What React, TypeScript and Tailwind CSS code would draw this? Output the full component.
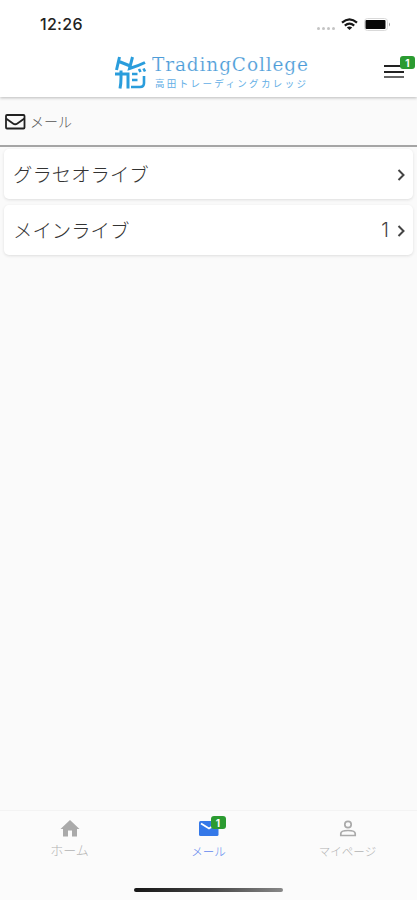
import React from 'react';

const jp = "font-['Inter','Noto_Sans_CJK_JP',sans-serif]";

function Status() {
  return (
    <div className="flex h-12 items-center justify-between pl-10 pr-[26px]">
      <span className="text-[16px] font-medium leading-5 tracking-[0.3px] text-[#222]">12:26</span>
      <div className="flex items-center">
        <div className="mr-[6px] mt-2 flex gap-[2px]">
          {[0, 1, 2, 3].map((i) => <i key={i} className="h-[3px] w-[3px] rounded-full bg-[#c4c4c4]" />)}
        </div>
        <svg width="17" height="13" viewBox="0 0 17 13" fill="none" stroke="#171717" strokeWidth="2.2" className="mr-[6px]">
          <path d="M1 4.600Q8.500-1.900 16 4.600M3.800 7.600Q8.500 3.600 13.200 7.600" />
          <path d="M8.500 12 5.800 9.500Q8.500 7.500 11.200 9.500Z" fill="#171717" stroke="none" />
        </svg>
        <svg width="27" height="13" viewBox="0 0 27 13">
          <rect x=".5" y=".5" width="23" height="12" rx="3" fill="#fff" stroke="#d9d9d9" />
          <rect x="1.500" y="2" width="20" height="9" rx="1" fill="#080808" />
          <path d="M25 4.500v4q2-2 0-4" fill="#999" />
        </svg>
      </div>
    </div>
  );
}

function Logo() {
  return (
    <div className="flex h-[38px] w-[195px] gap-[5px]">
      <svg width="33" height="36" viewBox="0 0 33 36" fill="none" stroke="#2a9ddc" strokeWidth="3" className="shrink-0">
        <path d="M5.500 2 2.500 15M5 6.500l10 4M18.500 2l-3 11.500Q24 11 31 7.500" />
        <path d="M1 19h13v14.500M7 15.500V23q0 6-1 10.500" />
        <path d="M18 19h5.500M18 25h5.500M17 32h9q4 0 4-4v-7M25 14l1.500 3M29.500 13.500l1.500 3" strokeWidth="2.600" />
      </svg>
      <div className="flex flex-col">
        <svg width="157" height="21" viewBox="0 0 157 21">
          <text x="0" y="16" fontFamily="'DejaVu Serif',serif" fontSize="18.500" fill="#4c9cd8" stroke="#fff" strokeWidth=".2" textLength="156" lengthAdjust="spacing">TradingCollege</text>
        </svg>
        <svg width="157" height="17" viewBox="0 0 157 17">
          <text x="3" y="11" fontFamily="'Noto Sans CJK JP',sans-serif" fontSize="9.500" fill="#62aee5" textLength="151" lengthAdjust="spacing">高田トレーディングカレッジ</text>
        </svg>
      </div>
    </div>
  );
}

function Badge({ className }: { className: string }) {
  return <span className={`absolute flex h-[13px] w-[15px] items-center justify-center rounded-[3px] bg-[#2b9b31] text-[10px] font-bold leading-none text-white ${className}`}>1</span>;
}

function Row({ name, count }: { name: string; count?: string }) {
  return (
    <div className="flex h-[50px] items-center justify-between rounded-[5px] bg-white pl-[9px] pr-[7px] pt-px text-[19.4px] text-[#333] shadow-[0_1px_3px_#dedede]">
      <span className="pt-[3px] font-light">{name}</span>
      <span className="flex items-center gap-[8px] pt-px font-light text-[#444]">
        {count}
        <svg width="9" height="12" viewBox="0 0 9 12" fill="none" stroke="#444" strokeWidth="2"><path d="m1.500 1 5 5-5 5" /></svg>
      </span>
    </div>
  );
}

export default function App() {
  return (
    <div className={`flex h-[900px] w-[417px] flex-col overflow-hidden bg-[#fafafa] ${jp}`}>
      <header className="z-10 h-[97px] shrink-0 bg-white shadow-[0_1px_3px_#bbb]">
        <Status />
        <div className="flex items-start justify-between pl-[114px] pr-[13px] pt-[7px]">
          <Logo />
          <div className="relative mt-[10px] flex h-[13px] w-5 flex-col justify-between">
            <i className="h-[2px] bg-[#222]" /><i className="h-[2px] bg-[#222]" /><i className="h-[2px] bg-[#666]" />
            <Badge className="-right-[11px] -top-[9px]" />
          </div>
        </div>
      </header>
      <div className="flex h-[50px] shrink-0 items-center gap-[4px] border-b-2 border-[#a5a5a5] pl-[5px] pt-px text-[14px] text-[#555]">
        <svg width="21" height="16" viewBox="0 0 21 16" fill="none" stroke="#222" strokeWidth="1.800"><rect x="1" y="1" width="18.500" height="13.500" rx="1" /><path d="m1 4.500 7 5q2.200 1.500 4.400 0l7-5" /></svg>
        <span className="font-light">メール</span>
      </div>
      <main className="flex flex-1 flex-col gap-[6px] px-1 pt-[2px]">
        <Row name="グラセオライブ" />
        <Row name="メインライブ" count="1" />
      </main>
      <nav className="h-[90px] shrink-0 border-t border-[#f3f3f3] bg-[#fbfbfb]">
        <div className="grid h-[71px] grid-cols-3 pt-[8px] text-[13px] font-light leading-4 text-[#b3b3b3]">
          <div className="flex flex-col items-center gap-[3px]">
            <svg width="22" height="20" viewBox="0 0 22 20"><path d="M11 1 1.500 10H4v7.500h5v-6h4v6h5V10h2.500Z" fill="#aaa" /></svg>
            ホーム
          </div>
          <div className="flex flex-col items-center gap-[5px] text-[11.5px] text-[#6288ee]">
            <div className="relative h-5 w-5">
              <svg width="20" height="20" viewBox="0 0 20 20"><rect y="2" width="19.500" height="15" rx="1.500" fill="#3478e8" /><path d="m2 4.500 8 5 8-5" fill="none" stroke="#fff" strokeWidth="1.800" /></svg>
              <Badge className="-right-[7px] -top-[3px]" />
            </div>
            メール
          </div>
          <div className="flex flex-col items-center gap-[5px] text-[11.5px]">
            <svg width="18" height="20" viewBox="0 0 18 20" fill="none" stroke="#aaa" strokeWidth="1.700"><circle cx="9" cy="5.500" r="3.200" /><path d="M1.800 16.500v-2q0-3 7.200-3t7.200 3v2Z" /></svg>
            マイページ
          </div>
        </div>
        <div className="ml-[134px] mt-[6px] h-[4px] w-[149px] rounded-full bg-gradient-to-r from-[#171717] via-[#444] to-[#888]" />
      </nav>
    </div>
  );
}
